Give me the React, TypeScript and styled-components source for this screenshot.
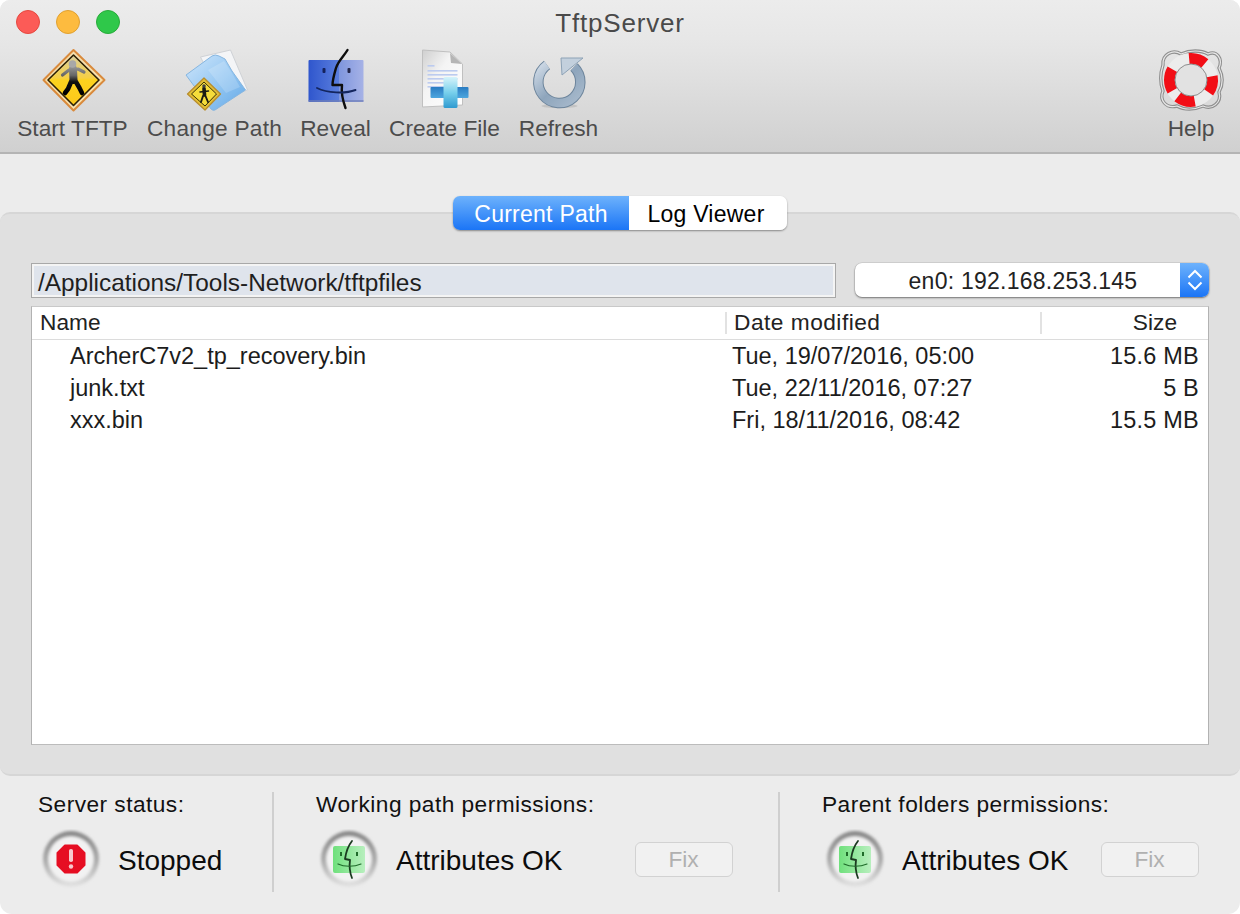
import React from "react";
import styled, { createGlobalStyle } from "styled-components";

const Global = createGlobalStyle`
  html, body { margin: 0; padding: 0; background: #fff; }
  body { font-family: "Liberation Sans", Arial, sans-serif; }
`;

const Win = styled.div`
  width: 1240px; height: 914px; display: flex; flex-direction: column;
  background: #ececec; border-radius: 10px 10px 12px 12px; overflow: hidden;
`;
const Toolbar = styled.header`
  position: relative; flex: none; height: 154px; box-sizing: border-box;
  display: flex; flex-direction: column;
  background: linear-gradient(#ececec, #e6e6e6 30%, #d0d0d0);
  border-bottom: 2px solid #b4b4b4;
`;
const Lights = styled.div`
  position: absolute; left: 16px; top: 10px; display: flex; gap: 16px;
`;
const Light = styled.span<{ $c: string; $b: string }>`
  width: 24px; height: 24px; border-radius: 50%; box-sizing: border-box;
  background: ${p => p.$c}; border: 1px solid ${p => p.$b};
`;
const Title = styled.div`
  height: 47px; line-height: 47px; text-align: center;
  font-size: 26px; letter-spacing: 0.8px; color: #4a4a4a;
`;
const Tools = styled.div`
  display: flex; gap: 19px; padding: 0 16px 0 17px;
`;
const Tool = styled.div<{ $w: number; $push?: boolean }>`
  width: ${p => p.$w}px; display: flex; flex-direction: column; align-items: center;
  ${p => (p.$push ? "margin-left: auto;" : "")}
`;
const ToolIcon = styled.svg`
  width: 66px; height: 66px; display: block; overflow: visible; flex: none;
`;
const ToolLabel = styled.span<{ $ls?: number }>`
  font-size: 22.7px; line-height: 26px; margin-top: 2px; color: #4c4c4c; white-space: nowrap;
  letter-spacing: ${p => p.$ls ?? 0}px;
`;
const Panel = styled.section`
  flex: none; margin-top: 58px; height: 564px; box-sizing: border-box;
  background: #e0e0e0; border: 2px solid #d6d6d6; border-left: none; border-right: none; border-radius: 10px;
  padding: 0 31px;
  display: flex; flex-direction: column;
`;
const Tabs = styled.div`
  align-self: center; display: flex; margin-top: -18px; height: 34px;
  border-radius: 7px; overflow: hidden; box-shadow: 0 1px 2px rgba(0,0,0,.4);
`;
const Tab = styled.div<{ $on?: boolean; $w: number }>`
  width: ${p => p.$w}px; display: flex; align-items: center; justify-content: center;
  padding: 3px ${p => (p.$on ? 0 : 4)}px 0 0; box-sizing: border-box;
  font-size: 23px; letter-spacing: .25px;
  color: ${p => (p.$on ? "#fff" : "#000")};
  background: ${p => (p.$on ? "linear-gradient(#6db2fc, #1b75f6)" : "#fff")};
`;
const PathRow = styled.div`
  display: flex; justify-content: space-between; margin-top: 33px; height: 35px;
`;
const PathField = styled.div`
  width: 805px; box-sizing: border-box; border: 1px solid #a8a8a8;
  background: #dfe4ec; box-shadow: inset 0 0 0 2px #f4f4f4;
  font-size: 24.4px; line-height: 37px; padding-left: 6px; color: #1f1f1f; white-space: nowrap;
`;
const Popup = styled.div`
  width: 354px; height: 34px; display: flex; border-radius: 7px; overflow: hidden;
  background: #fff; box-shadow: 0 1px 2px rgba(0,0,0,.45), 0 0 0 .5px rgba(0,0,0,.12);
`;
const PopupText = styled.span`
  flex: 1; text-align: center; font-size: 23px; letter-spacing: .25px; line-height: 36px; color: #222; padding-left: 11px;
`;
const PopupArrow = styled.span`
  width: 29px; background: linear-gradient(#6db2fc, #1b75f6);
  display: flex; align-items: center; justify-content: center;
`;
const Table = styled.div`
  margin-top: 8px; height: 439px; box-sizing: border-box; background: #fff;
  border: 1px solid #b2b2b2; border-top-color: #c9c9c9; border-bottom-color: #bcbcbc;
`;
const Row = styled.div`
  display: grid; grid-template-columns: 694px 315px 1fr; padding-left: 1px;
`;
const HeadRow = styled(Row)`
  height: 33px; border-bottom: 1px solid #dcdcdc; align-items: center;
  box-sizing: border-box; font-size: 22.7px; color: #222;
`;
const Head = styled.div<{ $right?: boolean; $ls?: number }>`
  height: 22px; line-height: 20px; padding-left: 7px; letter-spacing: ${p => p.$ls ?? 0}px;
  ${p => (p.$right
    ? "text-align: right; padding-right: 31px;"
    : "border-right: 2px solid #e2e2e2;")}
`;
const BodyRow = styled(Row)`
  height: 32px; line-height: 32px; font-size: 23.5px; color: #1c1c1c;
`;
const BodyRows = styled.div`
  padding-top: 0;
`;
const Name = styled.div`
  padding-left: 37px;
`;
const Dated = styled.div`
  padding-left: 5px;
`;
const Size = styled.div`
  text-align: right; padding-right: 9px; letter-spacing: .2px;
`;
const Footer = styled.footer`
  flex: 1; display: grid; grid-template-columns: 274px 506px 1fr; padding-top: 16px;
`;
const Section = styled.div<{ $pad: number; $end?: boolean }>`
  height: 100px; box-sizing: border-box; padding-left: ${p => p.$pad}px;
  ${p => (p.$end ? "" : "border-right: 2px solid #cfcfcf;")}
  display: flex; flex-direction: column;
`;
const SecLabel = styled.div`
  font-size: 22.7px; letter-spacing: .46px; line-height: 24px; color: #111; white-space: nowrap;
`;
const SecRow = styled.div`
  display: flex; align-items: center; margin-top: 13px; height: 62px;
`;
const StatusLabel = styled.span`
  font-size: 28px; color: #0c0c0c; margin-left: 16px; padding-top: 1px; white-space: nowrap;
`;
const Lamp = styled.svg`
  width: 62px; height: 62px; flex: none; margin-left: 2px;
`;
const FixBtn = styled.button<{ $ml: number }>`
  margin-left: ${p => p.$ml}px; width: 98px; height: 35px; padding: 0; box-sizing: border-box;
  background: #f1f1f1; border: 1px solid #d2d2d2; border-radius: 6px; margin-top: -2px;
  font: 22.7px "Liberation Sans", Arial, sans-serif; color: #b0b0b0;
`;

const arc = (cx: number, cy: number, r: number, a0: number, a1: number) => {
  const p = (a: number) => {
    const t = (a * Math.PI) / 180;
    return `${(cx + r * Math.cos(t)).toFixed(2)} ${(cy - r * Math.sin(t)).toFixed(2)}`;
  };
  return `M${p(a0)} A${r} ${r} 0 0 1 ${p(a1)}`;
};

const RoadSign = () => (
  <ToolIcon viewBox="0 0 66 66">
    <defs>
      <linearGradient id="sg1" x1="0" y1="0" x2="0" y2="1">
        <stop offset="0" stopColor="#d9cfa0" />
        <stop offset=".45" stopColor="#f5cf45" />
        <stop offset=".5" stopColor="#fcd21e" />
        <stop offset="1" stopColor="#fdc81a" />
      </linearGradient>
      <linearGradient id="sg2" gradientUnits="userSpaceOnUse" x1="0" y1="14" x2="0" y2="46">
        <stop offset="0" stopColor="#b5b5b5" />
        <stop offset=".45" stopColor="#666" />
        <stop offset=".65" stopColor="#111" />
        <stop offset="1" stopColor="#000" />
      </linearGradient>
    </defs>
    <path d="M33.5 3 L64.5 33 L33.5 63.5 L3.5 33Z" fill="#f7e0ae" stroke="#d98a3c" strokeWidth="2" strokeLinejoin="round" />
    <path d="M33.5 8 L59 33 L33.5 58.5 L8 33Z" fill="url(#sg1)" stroke="#2b1f05" strokeWidth="1.6" strokeLinejoin="round" />
    <g stroke="url(#sg2)" fill="none" strokeLinecap="round" strokeLinejoin="round">
      <path d="M22.5 28 L29 23 L38 22 L44 25" strokeWidth="3.2" />
      <path d="M33 22 L33.5 33" strokeWidth="8" />
      <path d="M31 35 L28 42 L25 46" strokeWidth="4.6" />
      <path d="M36 35 L39.5 41 L42 46" strokeWidth="4.6" />
    </g>
    <circle cx="32.5" cy="17" r="3.8" fill="#a8a8a8" />
  </ToolIcon>
);

const FolderSign = () => (
  <ToolIcon viewBox="0 0 66 66">
    <defs>
      <linearGradient id="fg1" x1="0" y1="0" x2="1" y2="1">
        <stop offset="0" stopColor="#cfe6fb" />
        <stop offset=".55" stopColor="#93c6f2" />
        <stop offset="1" stopColor="#63a8e6" />
      </linearGradient>
    </defs>
    <path d="M18.5 10 L48.5 3 L65.5 43 L40 52Z" fill="#f4f5f7" stroke="#cfd2d6" strokeWidth="1" />
    <path d="M4 28 L30 9 Q33 7 37 9 L43 12 L50 24 L63.5 43 L33 63 Q31 64 29 62Z" fill="url(#fg1)" stroke="#86b6e0" strokeWidth="1" strokeLinejoin="round" />
    <path d="M26 23 L42 14 L50 26 L58 40 L44 46Z" fill="#fff" opacity=".18" />
    <path d="M22 31 L38.5 47 L23 63 L5.5 47Z" fill="#e3bf34" stroke="#b88d2d" strokeWidth="1.3" strokeLinejoin="round" />
    <path d="M22 35 L34.5 47 L23 59 L9.5 47Z" fill="#f5dc3a" stroke="#3a3208" strokeWidth="1" strokeLinejoin="round" />
    <g stroke="#1b1b14" fill="none" strokeLinecap="round">
      <path d="M22 41.5 L22.5 48" strokeWidth="3.6" />
      <path d="M18 45 L26.5 44" strokeWidth="1.5" />
      <path d="M21 49 L19 55 M23.5 49 L26 55" strokeWidth="1.9" />
    </g>
    <circle cx="22" cy="39" r="1.8" fill="#444" />
  </ToolIcon>
);

const FinderFace = () => (
  <ToolIcon viewBox="0 0 66 66">
    <defs>
      <linearGradient id="ff1" x1="0" y1="0" x2="1" y2="0">
        <stop offset="0" stopColor="#2f56cd" />
        <stop offset=".55" stopColor="#5a7edd" />
        <stop offset=".56" stopColor="#7f96de" />
        <stop offset="1" stopColor="#a6b2e6" />
      </linearGradient>
    </defs>
    <rect x="5.5" y="13" width="55" height="42" rx="1" fill="url(#ff1)" />
    <rect x="5.5" y="53" width="55" height="2" fill="#6f7fb8" opacity=".7" />
    <path d="M44.5 3 C41 9 35 14 33 21 C31 28 29.5 33 29.5 38 L39 38 C38 46 40 54 42.5 61" fill="none" stroke="#0e0e0e" strokeWidth="2.4" strokeLinecap="round" strokeLinejoin="round" />
    <path d="M14 41 C24 46 42 47 52.5 43" fill="none" stroke="#14265f" strokeWidth="1.9" strokeLinecap="round" />
    <rect x="19.5" y="21" width="3" height="5" rx="1" fill="#14225c" />
    <rect x="44.5" y="21" width="3" height="5" rx="1" fill="#22264a" />
  </ToolIcon>
);

const DocPlus = () => (
  <ToolIcon viewBox="0 0 66 66">
    <defs>
      <linearGradient id="dp1" x1="0" y1="0" x2="1" y2="1">
        <stop offset="0" stopColor="#cfcfcf" />
        <stop offset=".4" stopColor="#f4f4f4" />
        <stop offset="1" stopColor="#fff" />
      </linearGradient>
      <linearGradient id="dp2" x1="0" y1="0" x2="0" y2="1">
        <stop offset="0" stopColor="#d6f3fa" />
        <stop offset=".5" stopColor="#78d0ec" />
        <stop offset="1" stopColor="#2f9ad0" />
      </linearGradient>
      <linearGradient id="dp3" x1="0" y1="0" x2="0" y2="1">
        <stop offset="0" stopColor="#2a7cc2" />
        <stop offset="1" stopColor="#4da6de" />
      </linearGradient>
    </defs>
    <path d="M10.5 3 L38 5 L50.5 17 L50.5 58 L10.5 60Z" fill="url(#dp1)" stroke="#c0c0c0" strokeWidth="1" strokeLinejoin="round" />
    <path d="M38 6 L39 16 L50 17Z" fill="#b5b5b5" />
    <g fill="#bccbef">
      <rect x="15.5" y="18" width="7" height="1.6" />
      <rect x="15.5" y="23" width="30" height="1.6" />
      <rect x="15.5" y="27" width="30" height="1.6" />
      <rect x="15.5" y="31" width="30" height="1.6" />
      <rect x="15.5" y="35" width="26" height="1.6" />
      <rect x="15.5" y="39" width="22" height="1.6" />
    </g>
    <rect x="18.5" y="40" width="38" height="11" rx="1" fill="url(#dp3)" />
    <rect x="31.5" y="30" width="14" height="31" rx="1.5" fill="url(#dp2)" />
  </ToolIcon>
);

const RefreshIcon = () => (
  <ToolIcon viewBox="0 0 66 66">
    <defs>
      <linearGradient id="rf1" x1="0" y1="0" x2="1" y2="1">
        <stop offset="0" stopColor="#cfdae6" />
        <stop offset=".5" stopColor="#8ea5bc" />
        <stop offset="1" stopColor="#a9bbcd" />
      </linearGradient>
    </defs>
    <ellipse cx="33.5" cy="59" rx="18" ry="2.2" fill="#000" opacity=".1" />
    <path d="M21 18 A21 21 0 1 0 48 20" fill="none" stroke="#6d859c" strokeWidth="10.5" />
    <path d="M21 18 A21 21 0 1 0 48 20" fill="none" stroke="url(#rf1)" strokeWidth="8.5" />
    <path d="M35 11 L57 11 L36 28Z" fill="#c3d0dd" stroke="#8da2b6" strokeWidth="1" strokeLinejoin="round" />
  </ToolIcon>
);

const ROPE = "M5 18 C4 7 15 2 23 7 C32 3 43 3 50 7 C59 3 65 12 61 21 C65 29 65 38 61 45 C64 56 54 63 45 59 C36 63 26 63 19 59 C8 62 1 53 5 44 C2 36 2 27 5 18Z";

const HelpIcon = () => (
  <ToolIcon viewBox="0 0 66 66">
    <path d={ROPE} fill="none" stroke="#8f8f8f" strokeWidth="3.4" />
    <path d={ROPE} fill="none" stroke="#e6e6e6" strokeWidth="1.2" />
    <circle cx="33" cy="33" r="21.5" fill="none" stroke="#ececec" strokeWidth="11" />
    <g fill="none" stroke="#f20e16" strokeWidth="11">
      <path d={arc(33, 33, 21.5, 95, 50)} />
      <path d={arc(33, 33, 21.5, 210, 150)} />
      <path d={arc(33, 33, 21.5, 280, 232)} />
      <path d={arc(33, 33, 21.5, 10, -35)} />
    </g>
    <circle cx="33" cy="33" r="16" fill="#e2e2e2" stroke="#8e8e8e" strokeWidth="1" />
  </ToolIcon>
);

const LampRing = ({ id }: { id: string }) => (
  <>
    <defs>
      <linearGradient id={id} x1="0" y1="0" x2="0" y2="1">
        <stop offset="0" stopColor="#858585" />
        <stop offset=".55" stopColor="#acacac" />
        <stop offset="1" stopColor="#e4e4e4" />
      </linearGradient>
      <filter id={`${id}b`} x="-20%" y="-20%" width="140%" height="140%">
        <feGaussianBlur stdDeviation="1.7" />
      </filter>
    </defs>
    <circle cx="31" cy="30" r="28" fill={`url(#${id})`} filter={`url(#${id}b)`} />
    <circle cx="31" cy="30" r="23" fill="#f2f2f2" filter={`url(#${id}b)`} />
  </>
);

const StoppedLamp = () => (
  <Lamp viewBox="0 0 62 62">
    <LampRing id="lr1" />
    <path d="M25 16.5 H37 L44.5 24 V36 L37 43.5 H25 L17.5 36 V24Z" fill="#e60e23" stroke="#e60e23" strokeWidth="2" strokeLinejoin="round" />
    <rect x="29" y="20" width="4" height="13" rx="1.8" fill="#f8c9ce" />
    <circle cx="31" cy="37.5" r="2.2" fill="#f8c9ce" />
  </Lamp>
);

const OkLamp = ({ id }: { id: string }) => (
  <Lamp viewBox="0 0 62 62">
    <LampRing id={`${id}r`} />
    <defs>
      <linearGradient id={`${id}g`} x1="0" y1="0" x2="1" y2="0">
        <stop offset="0" stopColor="#6fe07c" />
        <stop offset="1" stopColor="#b8efbe" />
      </linearGradient>
    </defs>
    <rect x="15" y="17" width="32" height="27" rx="2" fill={`url(#${id}g)`} />
    <path d="M34 12 C30 17 28 23 27 30 L32 31 C31 38 32 44 34 49" fill="none" stroke="#1b3a20" strokeWidth="1.8" strokeLinecap="round" strokeLinejoin="round" />
    <path d="M20 35 C26 38 36 38 43 35" fill="none" stroke="#1f6b2a" strokeWidth="1.2" strokeLinecap="round" />
    <rect x="22" y="23" width="2" height="4" fill="#1f6b2a" />
    <rect x="38" y="23" width="2" height="4" fill="#1f6b2a" />
  </Lamp>
);

export default function App() {
  return (
    <>
      <Global />
      <Win>
        <Toolbar>
          <Lights>
            <Light $c="#fc5b57" $b="#e5483f" />
            <Light $c="#fdbb3f" $b="#e0a030" />
            <Light $c="#2fc84a" $b="#28ab3a" />
          </Lights>
          <Title>TftpServer</Title>
          <Tools>
            <Tool $w={111}><RoadSign /><ToolLabel>Start TFTP</ToolLabel></Tool>
            <Tool $w={135}><FolderSign /><ToolLabel $ls={.25}>Change Path</ToolLabel></Tool>
            <Tool $w={69}><FinderFace /><ToolLabel>Reveal</ToolLabel></Tool>
            <Tool $w={111}><DocPlus /><ToolLabel>Create File</ToolLabel></Tool>
            <Tool $w={79}><RefreshIcon /><ToolLabel>Refresh</ToolLabel></Tool>
            <Tool $w={66} $push><HelpIcon /><ToolLabel>Help</ToolLabel></Tool>
          </Tools>
        </Toolbar>
        <Panel>
          <Tabs>
            <Tab $on $w={176}>Current Path</Tab>
            <Tab $w={158}>Log Viewer</Tab>
          </Tabs>
          <PathRow>
            <PathField>/Applications/Tools-Network/tftpfiles</PathField>
            <Popup>
              <PopupText>en0: 192.168.253.145</PopupText>
              <PopupArrow>
                <svg width="16" height="24" viewBox="0 0 16 24" fill="none" stroke="#fff" strokeWidth="2">
                  <path d="M1.5 9.5 L8 3 L14.5 9.5" />
                  <path d="M1.5 14.5 L8 21 L14.5 14.5" />
                </svg>
              </PopupArrow>
            </Popup>
          </PathRow>
          <Table>
            <HeadRow>
              <Head>Name</Head>
              <Head $ls={.5}>Date modified</Head>
              <Head $right>Size</Head>
            </HeadRow>
            <BodyRows>
              <BodyRow><Name>ArcherC7v2_tp_recovery.bin</Name><Dated>Tue, 19/07/2016, 05:00</Dated><Size>15.6 MB</Size></BodyRow>
              <BodyRow><Name>junk.txt</Name><Dated>Tue, 22/11/2016, 07:27</Dated><Size>5 B</Size></BodyRow>
              <BodyRow><Name>xxx.bin</Name><Dated>Fri, 18/11/2016, 08:42</Dated><Size>15.5 MB</Size></BodyRow>
            </BodyRows>
          </Table>
        </Panel>
        <Footer>
          <Section $pad={38}>
            <SecLabel>Server status:</SecLabel>
            <SecRow><StoppedLamp /><StatusLabel>Stopped</StatusLabel></SecRow>
          </Section>
          <Section $pad={42}>
            <SecLabel>Working path permissions:</SecLabel>
            <SecRow><OkLamp id="a" /><StatusLabel>Attributes OK</StatusLabel><FixBtn $ml={72}>Fix</FixBtn></SecRow>
          </Section>
          <Section $pad={42} $end>
            <SecLabel>Parent folders permissions:</SecLabel>
            <SecRow><OkLamp id="b" /><StatusLabel>Attributes OK</StatusLabel><FixBtn $ml={32}>Fix</FixBtn></SecRow>
          </Section>
        </Footer>
      </Win>
    </>
  );
}
